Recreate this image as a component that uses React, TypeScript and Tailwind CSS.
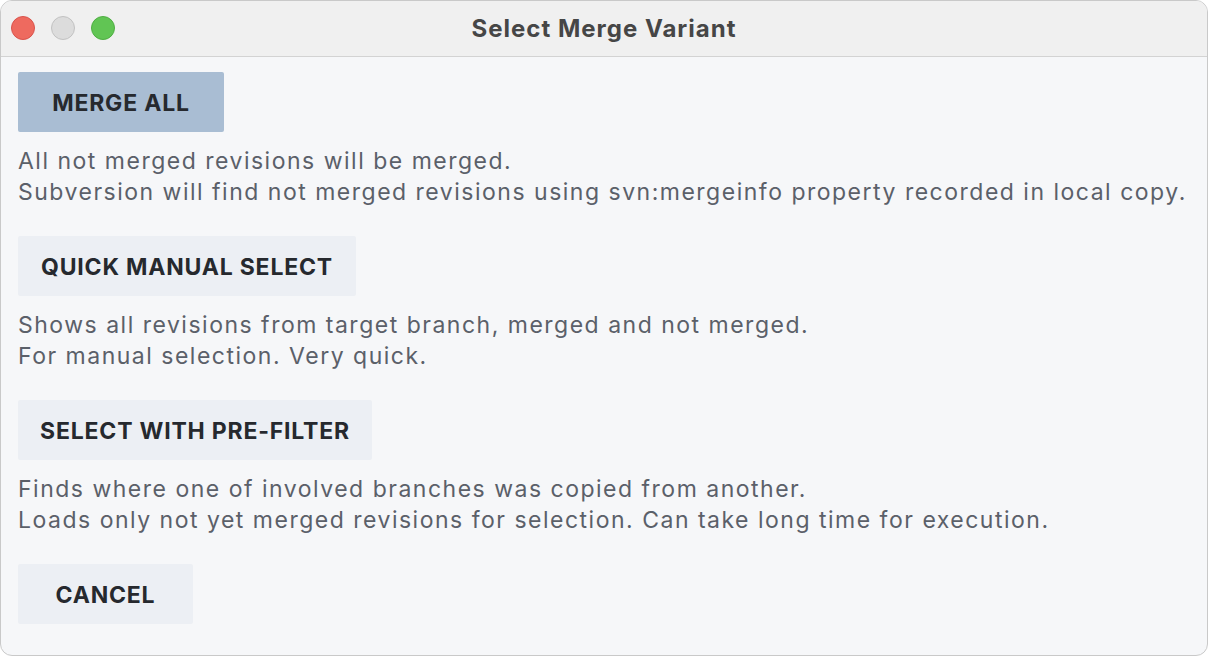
import React from "react";

const variants = [
  {
    label: "MERGE ALL",
    width: "w-[206px]",
    primary: true,
    lines: [
      "All not merged revisions will be merged.",
      "Subversion will find not merged revisions using svn:mergeinfo property recorded in local copy.",
    ],
  },
  {
    label: "QUICK MANUAL SELECT",
    width: "w-[338px]",
    lines: [
      "Shows all revisions from target branch, merged and not merged.",
      "For manual selection. Very quick.",
    ],
  },
  {
    label: "SELECT WITH PRE-FILTER",
    width: "w-[354px]",
    lines: [
      "Finds where one of involved branches was copied from another.",
      "Loads only not yet merged revisions for selection. Can take long time for execution.",
    ],
  },
];

function VariantButton({ label, width, primary }: { label: string; width: string; primary?: boolean }) {
  return (
    <button
      className={
        "h-[60px] rounded-[2px] pt-[3px] text-center text-[23px] font-bold tracking-[0.8px] text-[#26292e] " +
        width +
        " " +
        (primary ? "bg-[#a9bdd3]" : "bg-[#eceff4]")
      }
    >
      {label}
    </button>
  );
}

export default function App() {
  return (
    <div className="h-[656px] w-[1208px] bg-white" style={{ fontFamily: "Inter, 'Noto Sans', sans-serif" }}>
      <div className="flex h-full flex-col overflow-hidden rounded-[12px] border border-[#c9c9c9] bg-[#f6f7f9]">
        {/* title bar */}
        <div className="relative flex h-[56px] items-center justify-center border-b border-[#d3d3d3] bg-[#f0f0f0]">
          <div className="absolute left-[10px] top-[15px] flex gap-[16px]">
            <span className="h-[24px] w-[24px] rounded-full border border-[#d9534c] bg-[#ee6a5f]" />
            <span className="h-[24px] w-[24px] rounded-full border border-[#c2c2c2] bg-[#dcdcdc]" />
            <span className="h-[24px] w-[24px] rounded-full border border-[#4fae43] bg-[#61c554]" />
          </div>
          <span className="text-[24px] font-bold tracking-[1px] text-[#464646]">Select Merge Variant</span>
        </div>

        <div className="flex flex-col items-start px-[17px] pt-[15px]">
          {variants.map((v) => (
            <div key={v.label} className="flex flex-col items-start">
              <VariantButton label={v.label} width={v.width} primary={v.primary} />
              <div className="whitespace-nowrap pb-[28px] pt-[14px] text-[23px] leading-[31px] tracking-[1.5px] text-[#5b6069]">
                {v.lines.map((l) => (
                  <div key={l}>{l}</div>
                ))}
              </div>
            </div>
          ))}
          <VariantButton label="CANCEL" width="w-[175px]" />
        </div>
      </div>
    </div>
  );
}
